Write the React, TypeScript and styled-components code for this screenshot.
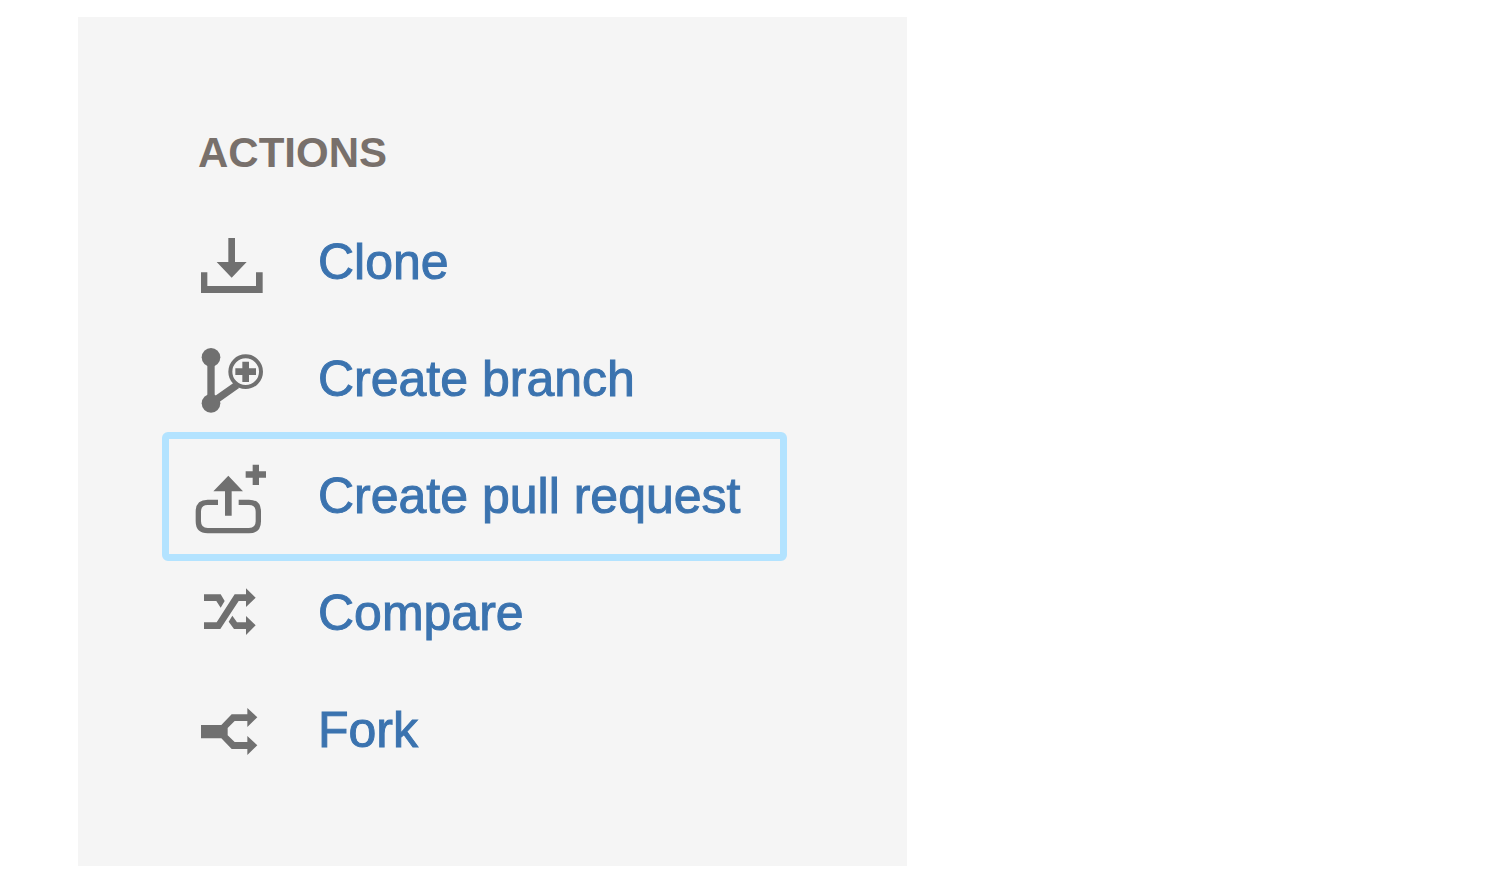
import React from "react";
import styled, { createGlobalStyle, css } from "styled-components";

const GlobalStyle = createGlobalStyle`
  *, *::before, *::after { box-sizing: border-box; }
  body {
    margin: 0;
    background: #ffffff;
    font-family: "Liberation Sans", Arial, sans-serif;
  }
`;

const Page = styled.main`
  padding: 17px 78px;
`;

const Panel = styled.nav`
  max-width: 829px;
  padding: 112px 120px 71px 84px;
  background: #f5f5f5;
`;

const Heading = styled.h2`
  margin: 0 0 21px;
  padding-left: 36px;
  color: #78706b;
  font-size: 42px;
  font-weight: 700;
  line-height: 48px;
  text-transform: uppercase;
`;

const ActionList = styled.ul`
  margin: 0;
  padding: 0;
  list-style: none;
`;

const ActionItem = styled.li`
  & + & {
    margin-top: -12px;
  }
`;

const ActionLink = styled.a<{ $selected?: boolean }>`
  display: flex;
  align-items: center;
  gap: 38px;
  min-height: 129px;
  padding-left: 21px;
  border: 7px solid transparent;
  border-radius: 6px;
  color: #3b73af;
  text-decoration: none;
  ${({ $selected }) =>
    $selected &&
    css`
      border-color: #b3e3ff;
    `}
`;

const Icon = styled.svg`
  flex: none;
  width: 90px;
  height: 91px;
  color: #707070;
  fill: currentColor;
`;

const Label = styled.span`
  padding-bottom: 2px;
  font-size: 50px;
  line-height: 56px;
  white-space: nowrap;
  -webkit-text-stroke: 1px currentColor;
`;

const CloneIcon = () => (
  <Icon viewBox="0 -24 270 273" aria-hidden="true">
    <path d="M115 39h20v72h35l-45 47l-45-47h35z" />
    <path d="M33 142h19v41h146v-41h20v62H33z" />
  </Icon>
);

const BranchIcon = () => (
  <Icon viewBox="0 -18 270 273" aria-hidden="true">
    <circle cx="63" cy="52" r="28" />
    <circle cx="63" cy="190" r="28" />
    <path d="M63 52V190L141 135" fill="none" stroke="currentColor" strokeWidth="22" />
    <circle cx="167" cy="95" r="46" fill="#f5f5f5" stroke="currentColor" strokeWidth="12" />
    <path d="M157 65h20v20h21v20h-21v21h-20v-21h-21V85h21z" />
  </Icon>
);

const PullRequestIcon = () => (
  <Icon viewBox="0 -12 270 273" aria-hidden="true">
    <path
      d="M84 142H53Q25 142 25 170V199Q25 227 53 227H177Q205 227 205 199V170Q205 142 177 142H146"
      fill="none"
      stroke="currentColor"
      strokeWidth="16"
    />
    <path d="M115 62l44 47h-34v73h-20v-73H70z" />
    <path d="M188 29h19v20h21v19h-21v22h-19V68h-21V49h21z" />
  </Icon>
);

const CompareIcon = () => (
  <Icon viewBox="0 -36 270 273" aria-hidden="true">
    <path d="M42 43h50l12 20l-12 20l-13-20H42z" />
    <path d="M42 127h38l54-84h34V25l29 28l-29 28V63h-22L91 147H42z" />
    <path d="M127 107l14 20h27v-19l29 28l-29 29v-18h-36l-16-22z" />
  </Icon>
);

const ForkIcon = () => (
  <Icon viewBox="0 -45 270 273" aria-hidden="true">
    <path d="M33 75h61l31-32h47V24l30 28l-30 29V63h-38l-21 21v22l21 20h38v-18l30 28l-30 29v-18h-47l-31-32H33z" />
  </Icon>
);

const actions = [
  { id: "clone", label: "Clone", Glyph: CloneIcon },
  { id: "create-branch", label: "Create branch", Glyph: BranchIcon },
  { id: "create-pull-request", label: "Create pull request", Glyph: PullRequestIcon },
  { id: "compare", label: "Compare", Glyph: CompareIcon },
  { id: "fork", label: "Fork", Glyph: ForkIcon },
];

export default function App() {
  const selected = "create-pull-request";
  return (
    <>
      <GlobalStyle />
      <Page>
        <Panel aria-labelledby="actions-heading">
          <Heading id="actions-heading">Actions</Heading>
          <ActionList>
            {actions.map(({ id, label, Glyph }) => (
              <ActionItem key={id}>
                <ActionLink
                  href={`#${id}`}
                  $selected={id === selected}
                  aria-current={id === selected ? "true" : undefined}
                >
                  <Glyph />
                  <Label>{label}</Label>
                </ActionLink>
              </ActionItem>
            ))}
          </ActionList>
        </Panel>
      </Page>
    </>
  );
}
